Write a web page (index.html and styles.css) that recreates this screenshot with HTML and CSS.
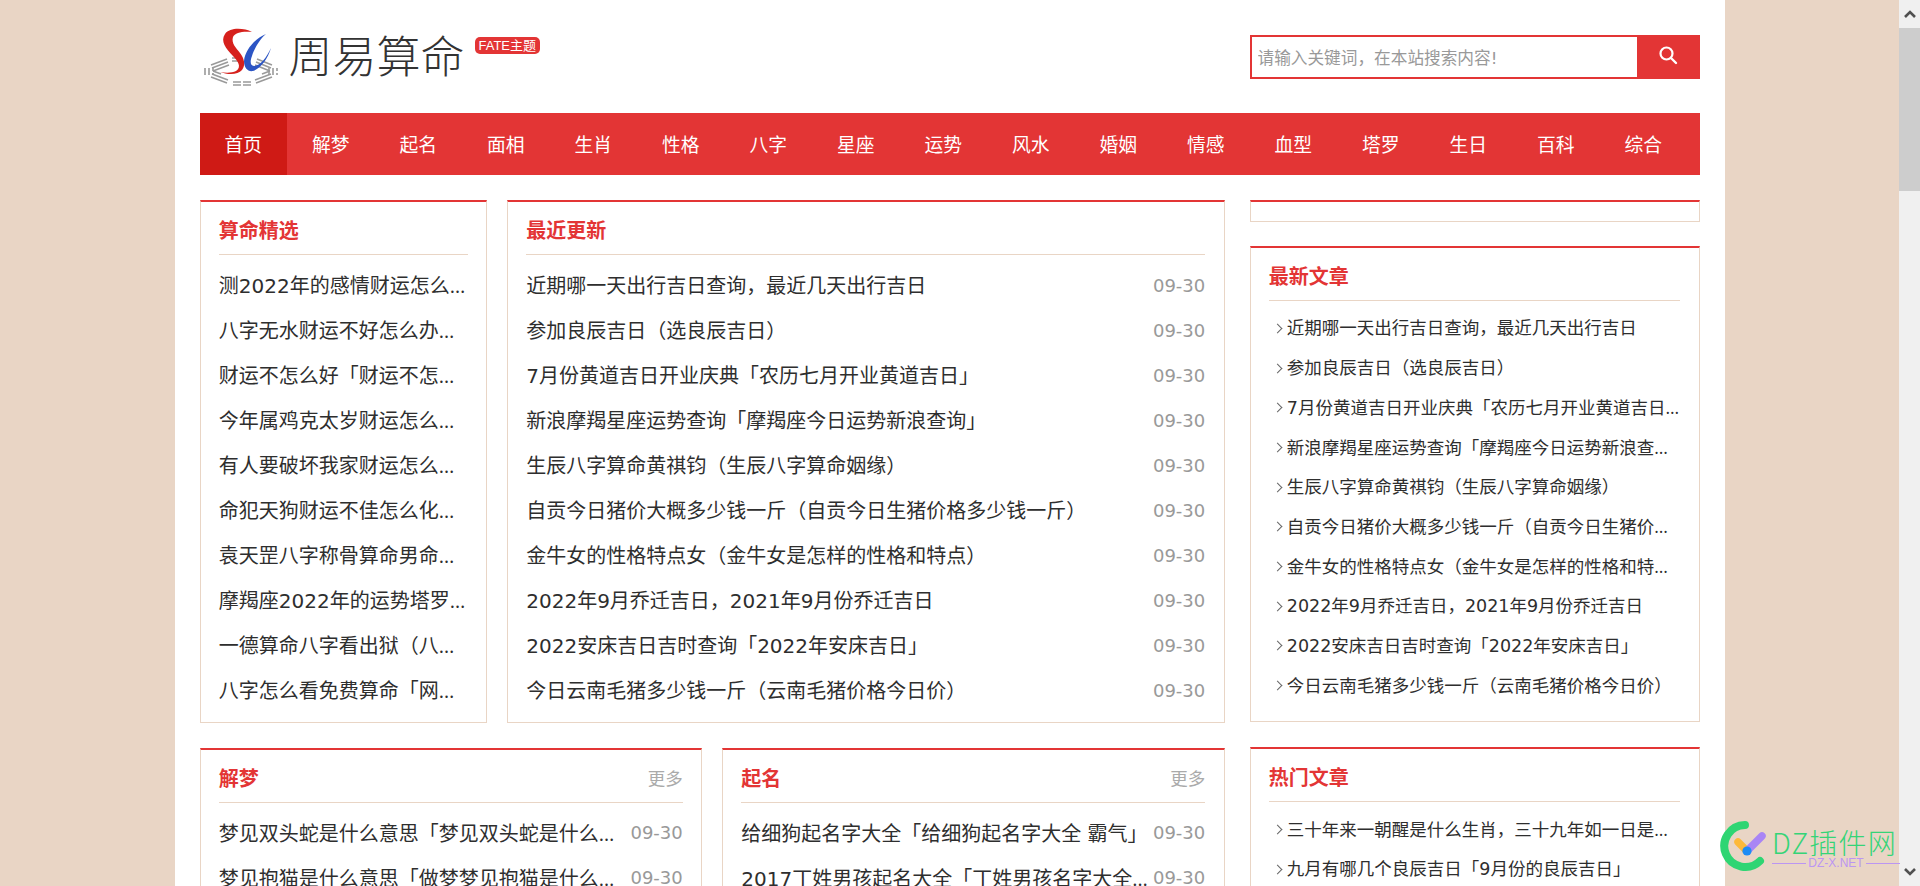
FILE: index.html
```html
<!DOCTYPE html>
<html lang="zh-CN">
<head>
<meta charset="utf-8">
<title>周易算命</title>
<link rel="stylesheet" href="styles.css">
</head>
<body>
<div class="stage">
  <div class="page">
    <div class="wrap">
      <header class="header">
        <a class="logo">
          <svg class="logo-mark" viewBox="0 0 85 65" width="85" height="65" aria-hidden="true">
            <g class="bagua">
              <path d="M11 40 27 34M12 43 28 37M13 46 29 40"/>
              <path d="M57 34 72 40M56 37 71 43M55 40 70 46"/>
              <path d="M5 43V50M9 43V50M13 43V46M13 48V50"/>
              <path d="M69 43V50M73 43V50M77 43V46M77 48V50"/>
              <path d="M11 52 27 58M12 49 28 55M13 46 21 49"/>
              <path d="M72 52 56 58M71 49 55 55M70 46 62 49"/>
              <path d="M33 57H41M43 57H51M33 60H41M43 60H51"/>
              <path d="M32 33H42M32 36H42"/>
            </g>
            <path class="s-red" d="M52 7C44 3 30 2 25 9 20 16 26 24 33 31 38 36 42 42 36 46 32 48 26 48 20 47 28 50 38 50 42 45 46 40 44 33 40 28 36 23 31 18 33 12 35 7 44 6 52 7Z"/>
            <path class="c-blue" d="M66 9C56 13 45 24 44 36 44 43 48 47 53 46 60 44 68 34 71 23 67 32 60 41 54 41 50 41 50 36 52 31 54 24 60 14 66 9Z"/>
          </svg>
          <span class="logo-text">周易算命</span>
          <span class="logo-badge">FATE主题</span>
        </a>
        <form class="search">
          <input class="search-input" type="text" placeholder="请输入关键词，在本站搜索内容!">
          <button class="search-btn" type="button" aria-label="搜索">
            <svg viewBox="0 0 20 20" width="20" height="20"><circle cx="8.5" cy="8.5" r="6" fill="none" stroke="#fff" stroke-width="2.2"/><path d="M13 13 18 18" stroke="#fff" stroke-width="2.4" stroke-linecap="round"/></svg>
          </button>
        </form>
      </header>

      <nav class="nav">
        <a class="nav-item active">首页</a><a class="nav-item">解梦</a><a class="nav-item">起名</a><a class="nav-item">面相</a><a class="nav-item">生肖</a><a class="nav-item">性格</a><a class="nav-item">八字</a><a class="nav-item">星座</a><a class="nav-item">运势</a><a class="nav-item">风水</a><a class="nav-item">婚姻</a><a class="nav-item">情感</a><a class="nav-item">血型</a><a class="nav-item">塔罗</a><a class="nav-item">生日</a><a class="nav-item">百科</a><a class="nav-item">综合</a>
      </nav>

      <div class="layout">
        <main class="main">
          <div class="row-top">
            <section class="card card-pick">
              <h2 class="card-title"><span>算命精选</span></h2>
              <ul class="list">
                <li class="item"><a class="link">测2022年的感情财运怎么<span class="ell">…</span></a></li>
                <li class="item"><a class="link">八字无水财运不好怎么办<span class="ell">…</span></a></li>
                <li class="item"><a class="link">财运不怎么好「财运不怎<span class="ell">…</span></a></li>
                <li class="item"><a class="link">今年属鸡克太岁财运怎么<span class="ell">…</span></a></li>
                <li class="item"><a class="link">有人要破坏我家财运怎么<span class="ell">…</span></a></li>
                <li class="item"><a class="link">命犯天狗财运不佳怎么化<span class="ell">…</span></a></li>
                <li class="item"><a class="link">袁天罡八字称骨算命男命<span class="ell">…</span></a></li>
                <li class="item"><a class="link">摩羯座2022年的运势塔罗<span class="ell">…</span></a></li>
                <li class="item"><a class="link">一德算命八字看出狱（八<span class="ell">…</span></a></li>
                <li class="item"><a class="link">八字怎么看免费算命「网<span class="ell">…</span></a></li>
              </ul>
            </section>
            <section class="card card-recent">
              <h2 class="card-title"><span>最近更新</span></h2>
              <ul class="list">
                <li class="item"><a class="link">近期哪一天出行吉日查询，最近几天出行吉日</a><span class="date">09-30</span></li>
                <li class="item"><a class="link">参加良辰吉日（选良辰吉日）</a><span class="date">09-30</span></li>
                <li class="item"><a class="link">7月份黄道吉日开业庆典「农历七月开业黄道吉日」</a><span class="date">09-30</span></li>
                <li class="item"><a class="link">新浪摩羯星座运势查询「摩羯座今日运势新浪查询」</a><span class="date">09-30</span></li>
                <li class="item"><a class="link">生辰八字算命黄祺钧（生辰八字算命姻缘）</a><span class="date">09-30</span></li>
                <li class="item"><a class="link">自贡今日猪价大概多少钱一斤（自贡今日生猪价格多少钱一斤）</a><span class="date">09-30</span></li>
                <li class="item"><a class="link">金牛女的性格特点女（金牛女是怎样的性格和特点）</a><span class="date">09-30</span></li>
                <li class="item"><a class="link">2022年9月乔迁吉日，2021年9月份乔迁吉日</a><span class="date">09-30</span></li>
                <li class="item"><a class="link">2022安床吉日吉时查询「2022年安床吉日」</a><span class="date">09-30</span></li>
                <li class="item"><a class="link">今日云南毛猪多少钱一斤（云南毛猪价格今日价）</a><span class="date">09-30</span></li>
              </ul>
            </section>
          </div>
          <div class="row-bottom">
            <section class="card">
              <h2 class="card-title"><span>解梦</span><a class="more">更多</a></h2>
              <ul class="list">
                <li class="item"><a class="link">梦见双头蛇是什么意思「梦见双头蛇是什么<span class="ell">…</span></a><span class="date">09-30</span></li>
                <li class="item"><a class="link">梦见抱猫是什么意思「做梦梦见抱猫是什么<span class="ell">…</span></a><span class="date">09-30</span></li>
              </ul>
            </section>
            <section class="card">
              <h2 class="card-title"><span>起名</span><a class="more">更多</a></h2>
              <ul class="list">
                <li class="item"><a class="link">给细狗起名字大全「给细狗起名字大全 霸气」</a><span class="date">09-30</span></li>
                <li class="item"><a class="link">2017丁姓男孩起名大全「丁姓男孩名字大全<span class="ell">…</span></a><span class="date">09-30</span></li>
              </ul>
            </section>
          </div>
        </main>
        <aside class="side">
          <section class="card card-empty"></section>
          <section class="card card-latest">
            <h2 class="card-title"><span>最新文章</span></h2>
            <ul class="list list-arrow">
              <li class="item"><a class="link">近期哪一天出行吉日查询，最近几天出行吉日</a></li>
              <li class="item"><a class="link">参加良辰吉日（选良辰吉日）</a></li>
              <li class="item"><a class="link">7月份黄道吉日开业庆典「农历七月开业黄道吉日<span class="ell">…</span></a></li>
              <li class="item"><a class="link">新浪摩羯星座运势查询「摩羯座今日运势新浪查<span class="ell">…</span></a></li>
              <li class="item"><a class="link">生辰八字算命黄祺钧（生辰八字算命姻缘）</a></li>
              <li class="item"><a class="link">自贡今日猪价大概多少钱一斤（自贡今日生猪价<span class="ell">…</span></a></li>
              <li class="item"><a class="link">金牛女的性格特点女（金牛女是怎样的性格和特<span class="ell">…</span></a></li>
              <li class="item"><a class="link">2022年9月乔迁吉日，2021年9月份乔迁吉日</a></li>
              <li class="item"><a class="link">2022安床吉日吉时查询「2022年安床吉日」</a></li>
              <li class="item"><a class="link">今日云南毛猪多少钱一斤（云南毛猪价格今日价）</a></li>
            </ul>
          </section>
          <section class="card card-hot">
            <h2 class="card-title"><span>热门文章</span></h2>
            <ul class="list list-arrow">
              <li class="item"><a class="link">三十年来一朝醒是什么生肖，三十九年如一日是<span class="ell">…</span></a></li>
              <li class="item"><a class="link">九月有哪几个良辰吉日「9月份的良辰吉日」</a></li>
            </ul>
          </section>
        </aside>
      </div>
    </div>
  </div>
  <div class="scrollbar" aria-hidden="true">
    <div class="sb-btn"><svg viewBox="0 0 14 10" width="14" height="10"><path d="M2 8 7 3l5 5" fill="none" stroke="#505050" stroke-width="2.6"/></svg></div>
    <div class="sb-thumb"></div>
    <div class="sb-track"></div>
    <div class="sb-btn"><svg viewBox="0 0 14 10" width="14" height="10"><path d="M2 2l5 5 5-5" fill="none" stroke="#505050" stroke-width="2.6"/></svg></div>
  </div>
  <div class="watermark">
    <svg class="wm-icon" viewBox="0 0 54 54" width="54" height="54" aria-hidden="true">
      <path d="M27 6A21 21 0 1 0 42 42" fill="none" stroke="#2fd573" stroke-width="8" stroke-linecap="round"/>
      <path d="M20 23 29 32" stroke="#fdb93a" stroke-width="7.5" stroke-linecap="round"/>
      <path d="M29 32 44 17" stroke="#a985f5" stroke-width="7.5" stroke-linecap="round"/>
      <circle cx="29" cy="32" r="4.6" fill="#1e8cf5"/>
    </svg>
    <div class="wm-text">
      <div class="wm-title">DZ插件网</div>
      <div class="wm-sub"><span class="wm-url">DZ-X.NET</span></div>
    </div>
  </div>
</div>
</body>
</html>
```

FILE: styles.css
```css
* { box-sizing: border-box; }
html, body { margin: 0; height: 100%; overflow: hidden; }
body {
  font-family: "DejaVu Sans", "Noto Sans CJK SC", sans-serif;
  color: #2e2e2e;
  background: #e9d5c5;
}
ul { list-style: none; margin: 0; padding: 0; }
h2 { margin: 0; }
a { color: inherit; text-decoration: none; }

.stage { position: relative; display: flex; width: 1920px; height: 886px; overflow: hidden; }
.page { flex: 1; min-width: 0; height: 886px; overflow: hidden; }
.wrap { width: 1550px; min-height: 1200px; margin: 0 auto; padding: 0 25px; background: #fff; }

/* header */
.header { display: flex; align-items: center; justify-content: space-between; height: 112.5px; }
.logo { display: flex; align-items: flex-start; height: 65px; margin-top: 2px; }
.logo-mark { display: block; flex: none; }
.bagua path { fill: none; stroke: #9a9a9a; stroke-width: 1.6; }
.s-red { fill: #d6201c; }
.c-blue { fill: #2c55c4; }
.logo-text {
  margin-left: 4px;
  font-family: "Noto Sans CJK SC", sans-serif;
  font-size: 44px;
  font-weight: 300;
  line-height: 59px;
  color: #333;
  white-space: nowrap;
}
.logo-badge {
  margin: 12px 0 0 10px;
  height: 17.5px;
  padding: 0 4px;
  border-radius: 5px;
  background: #e33535;
  color: #fff;
  font-family: "Liberation Sans", "Noto Sans CJK SC", sans-serif;
  font-size: 13px;
  line-height: 17.5px;
  white-space: nowrap;
}
.search { display: flex; width: 450px; height: 43.5px; margin-top: 1px; }
.search-input {
  flex: 1;
  min-width: 0;
  height: 100%;
  padding: 3px 4px 0 6px;
  border: 2.5px solid #e33535;
  border-right: 0;
  outline: 0;
  background: #fff;
  font-family: "DejaVu Sans", "Noto Sans CJK SC", sans-serif;
  font-size: 16.67px;
}
.search-input::placeholder { color: #999; opacity: 1; }
.search-btn {
  display: flex;
  align-items: center;
  justify-content: center;
  width: 62.5px;
  height: 100%;
  padding: 0 0 4px;
  border: 0;
  background: #e33535;
}

/* nav */
.nav { display: flex; height: 62.5px; background: #e33535; }
.nav-item {
  width: 87.5px;
  color: #fff;
  font-family: "Noto Sans CJK SC", sans-serif;
  font-size: 18.75px;
  line-height: 62.5px;
  text-align: center;
}
.nav-item.active { background: #cf1a15; }

/* layout */
.layout { display: flex; gap: 25px; margin-top: 25px; }
.main { width: 1025px; flex: none; }
.side { width: 450px; flex: none; }
.row-top { display: flex; gap: 20px; }
.row-bottom { display: flex; gap: 20px; margin-top: 25px; }
.row-bottom .card { width: 502.5px; }

/* card */
.card {
  padding: 0 18.25px 8px;
  border: 1.25px solid #e9d5c5;
  border-top: 2.5px solid #e33535;
  background: #fff;
}
.card-pick { width: 287.5px; flex: none; }
.card-recent { width: 717.5px; flex: none; }
.card-empty { height: 21.5px; margin-bottom: 24px; padding: 0; }
.card-latest { height: 476px; margin-bottom: 25px; }
.card-title {
  display: flex;
  align-items: center;
  justify-content: space-between;
  height: 53px;
  padding-top: 3px;
  border-bottom: 1.25px solid #e9d5c5;
  color: #e33535;
  font-family: "Noto Sans CJK SC", sans-serif;
  font-size: 20px;
  font-weight: 700;
}
.more { color: #aaa; font-size: 17.5px; font-weight: 400; }

/* lists */
.list { padding-top: 8.5px; }
.item { display: flex; align-items: center; gap: 16px; height: 45px; font-size: 20px; }
.link { flex: 1; min-width: 0; white-space: nowrap; line-height: 30px; }
.ell { font-family: "Open Sans", sans-serif; }
.date { flex: none; margin-top: -2px; color: #999; font-size: 18px; }

.list-arrow { padding-top: 8px; }
.list-arrow .item { gap: 0; height: 39.7px; padding-left: 7px; font-size: 17.5px; }
.list-arrow .item::before {
  content: "";
  flex: none;
  width: 6px;
  height: 6px;
  margin: 0 6px 0 -2px;
  border-top: 1.25px solid #666;
  border-right: 1.25px solid #666;
  transform: rotate(45deg);
}

/* scrollbar */
.scrollbar { display: flex; flex-direction: column; flex: none; width: 21px; height: 886px; background: #f0f0f0; }
.sb-btn { display: flex; align-items: center; justify-content: center; flex: none; height: 28px; }
.sb-thumb { flex: none; height: 163px; background: #cdcdcd; }
.sb-track { flex: 1; }

/* watermark */
.watermark { position: absolute; left: 1718px; top: 819px; display: flex; align-items: flex-start; pointer-events: none; }
.wm-icon { flex: none; display: block; }
.wm-text { width: 128px; margin-top: 9px; }
.wm-title { font-family: "Noto Sans CJK SC", sans-serif; font-size: 28px; letter-spacing: 1.2px; line-height: 28px; color: #35d477; white-space: nowrap; font-weight: 300; }
.wm-sub { display: flex; align-items: center; justify-content: center; height: 14px; background: linear-gradient(#bb96f2, #bb96f2) center / 100% 1px no-repeat; }
.wm-url { padding: 0 2px; background: #e9d5c5; color: #bb96f2; font-family: "Liberation Sans", sans-serif; font-size: 12px; line-height: 14px; }
```
